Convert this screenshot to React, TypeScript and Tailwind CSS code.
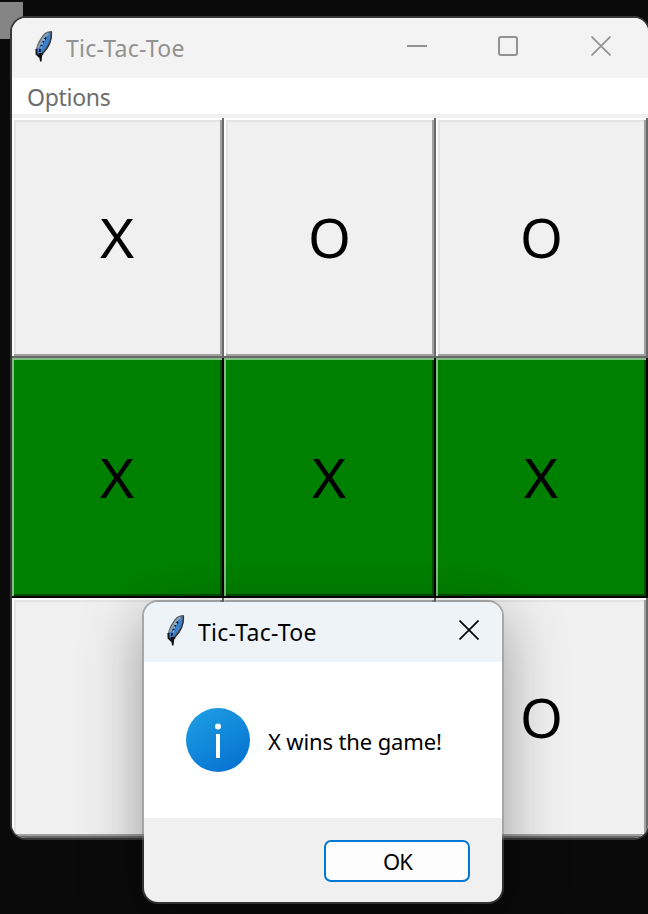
import React from "react";

type Mark = "X" | "O" | "";

const rows: { mark: Mark; win: boolean }[][] = [
  [{ mark: "X", win: false }, { mark: "O", win: false }, { mark: "O", win: false }],
  [{ mark: "X", win: true }, { mark: "X", win: true }, { mark: "X", win: true }],
  [{ mark: "", win: false }, { mark: "", win: false }, { mark: "O", win: false }],
];

function Feather() {
  return (
    <svg width="20" height="34" viewBox="0 0 20 34" className="shrink-0">
      <path d="M18 1C13 1 10 3 7.500 7C4 12 1.500 17 2 24L5 27L9 24C14 19 19 12 18 1Z" fill="#5b6068" />
      <path d="M16.500 2.500C12 3.500 10 6 8 9.500C5 14 3 18 3.500 23L5.500 24.500C11 20 17 12 16.500 2.500Z" fill="#3d80cf" />
      <path d="M14.500 3.500C11.500 5 9 8 7 12L3.800 18" stroke="#8fa5b8" strokeWidth="2" fill="none" />
      <path d="M12 7.500L8.500 13L6.500 18L5.500 22" stroke="#10151c" strokeWidth="1.700" strokeDasharray="3 1.300" fill="none" />
      <path d="M10.500 9L8 14L6.500 20" stroke="#a9d3f6" strokeWidth="1.300" strokeDasharray="2 2" fill="none" />
      <path d="M17.500 2C18 11 14 18 8.500 23.500" stroke="#30343a" strokeWidth="1.200" fill="none" />
      <path d="M2.300 19L2.500 24L5 26.500L9 23.500" stroke="#15171a" strokeWidth="1.800" fill="none" />
      <path d="M4.500 23L6 31.500H7.500L8.500 23Z" fill="#111" />
    </svg>
  );
}

function CloseIcon() {
  return (
    <svg width="20" height="20" viewBox="0 0 20 20" fill="none" stroke="currentColor" strokeWidth="1.700">
      <path d="M0.500 0.500L19.500 19.500M19.500 0.500L0.500 19.500" />
    </svg>
  );
}

// Nested frames give the squared corners of a classic raised bevel.
function Cell({ mark, win }: { mark: Mark; win: boolean }) {
  return (
    <div className={"h-[240px] border-r-2 border-b-2 " + (win ? "border-black" : "border-[#696969]")}>
      <div className={"h-full border-t-2 border-l-2 " + (win ? "border-[#80c080]" : "border-white")}>
        <div className={"h-full border-r-2 border-b-2 " + (win ? "border-[#004b00]" : "border-[#a0a0a0]")}>
          <div
            className={
              "flex h-full items-center justify-center border-t-2 border-l-2 pr-px pb-[3px] text-[55px] leading-none text-black " +
              (win ? "border-[#008000] bg-[#008000]" : "border-[#e3e3e3] bg-[#f0f0f0]")
            }
          >
            <span className={mark === "X" ? "pr-px scale-x-106" : ""}>{mark}</span>
          </div>
        </div>
      </div>
    </div>
  );
}

export default function App() {
  return (
    <div className="relative h-[914px] w-[648px] overflow-hidden bg-[#0a0a0a] pl-[10px] pt-4 font-['Noto_Sans','Open_Sans',sans-serif]">
      <div className="absolute left-0 top-[2px] h-[37px] w-[23px] bg-[#858585]" />
      <main className="relative w-[640px] overflow-hidden rounded-[16px] border-2 border-[#383838] bg-[#f0f0f0]">
        <header className="flex h-[60px] items-center bg-[#f3f3f3] pl-[22px] text-[#919191]">
          <div className="mb-[2px]"><Feather /></div>
          <h1 className="ml-3 w-[120px] whitespace-nowrap pt-px text-[23px] tracking-[0.28px]">Tic-Tac-Toe</h1>
          <div className="mb-1 ml-[221px] flex items-center">
            <div className="h-[2px] w-5 bg-[#919191]" />
            <div className="ml-[71px] h-5 w-5 rounded-[3px] border-2 border-[#919191]" />
            <div className="ml-[73px]"><CloseIcon /></div>
          </div>
        </header>
        <nav className="flex h-9 items-center bg-white pl-[15px] pt-[2px] text-[23px] tracking-[-0.3px] text-[#6d6d6d]">
          <span>Options</span>
        </nav>
        <div className="grid grid-cols-3 pt-1">
          {rows.flat().map((c, i) => <Cell key={i} mark={c.mark} win={c.win} />)}
        </div>
      </main>

      <section className="absolute left-[142px] top-[600px] w-[362px] rounded-[16px] border-2 border-[#5c5c5c]/50 bg-clip-padding shadow-[0_16px_60px_rgba(0,0,0,0.36)]">
        <div className="overflow-hidden rounded-[14px]">
          <header className="flex h-[60px] items-center bg-[#eef3f8] pl-[22px] text-black">
            <div className="mb-[2px]"><Feather /></div>
            <h2 className="ml-3 w-[120px] whitespace-nowrap pt-px text-[23px] tracking-[0.28px]">Tic-Tac-Toe</h2>
            <div className="mb-1 ml-[141px]"><CloseIcon /></div>
          </header>
          <div className="flex h-[156px] items-center bg-white pl-[42px]">
            <svg width="64" height="64" viewBox="0 0 64 64">
              <defs>
                <linearGradient id="info" x1="0.200" y1="0" x2="0.800" y2="1">
                  <stop offset="0" stopColor="#1e9de3" />
                  <stop offset="1" stopColor="#0571d1" />
                </linearGradient>
              </defs>
              <circle cx="32" cy="32" r="32" fill="url(#info)" />
              <circle cx="32" cy="18.500" r="3" fill="white" />
              <rect x="30" y="26" width="4" height="24" fill="white" />
            </svg>
            <p className="ml-[18px] whitespace-nowrap pt-[2px] text-[22px] tracking-[-0.13px] text-black">X wins the game!</p>
          </div>
          <footer className="flex h-[84px] items-center justify-end bg-[#f0f0f0] pt-[2px] pr-8">
            <button className="h-[42px] w-[146px] rounded-[7px] border-2 border-[#0078d4] bg-[#fdfdfd] pl-px text-[22px] leading-none tracking-[-0.8px] text-black">OK</button>
          </footer>
        </div>
      </section>
    </div>
  );
}
